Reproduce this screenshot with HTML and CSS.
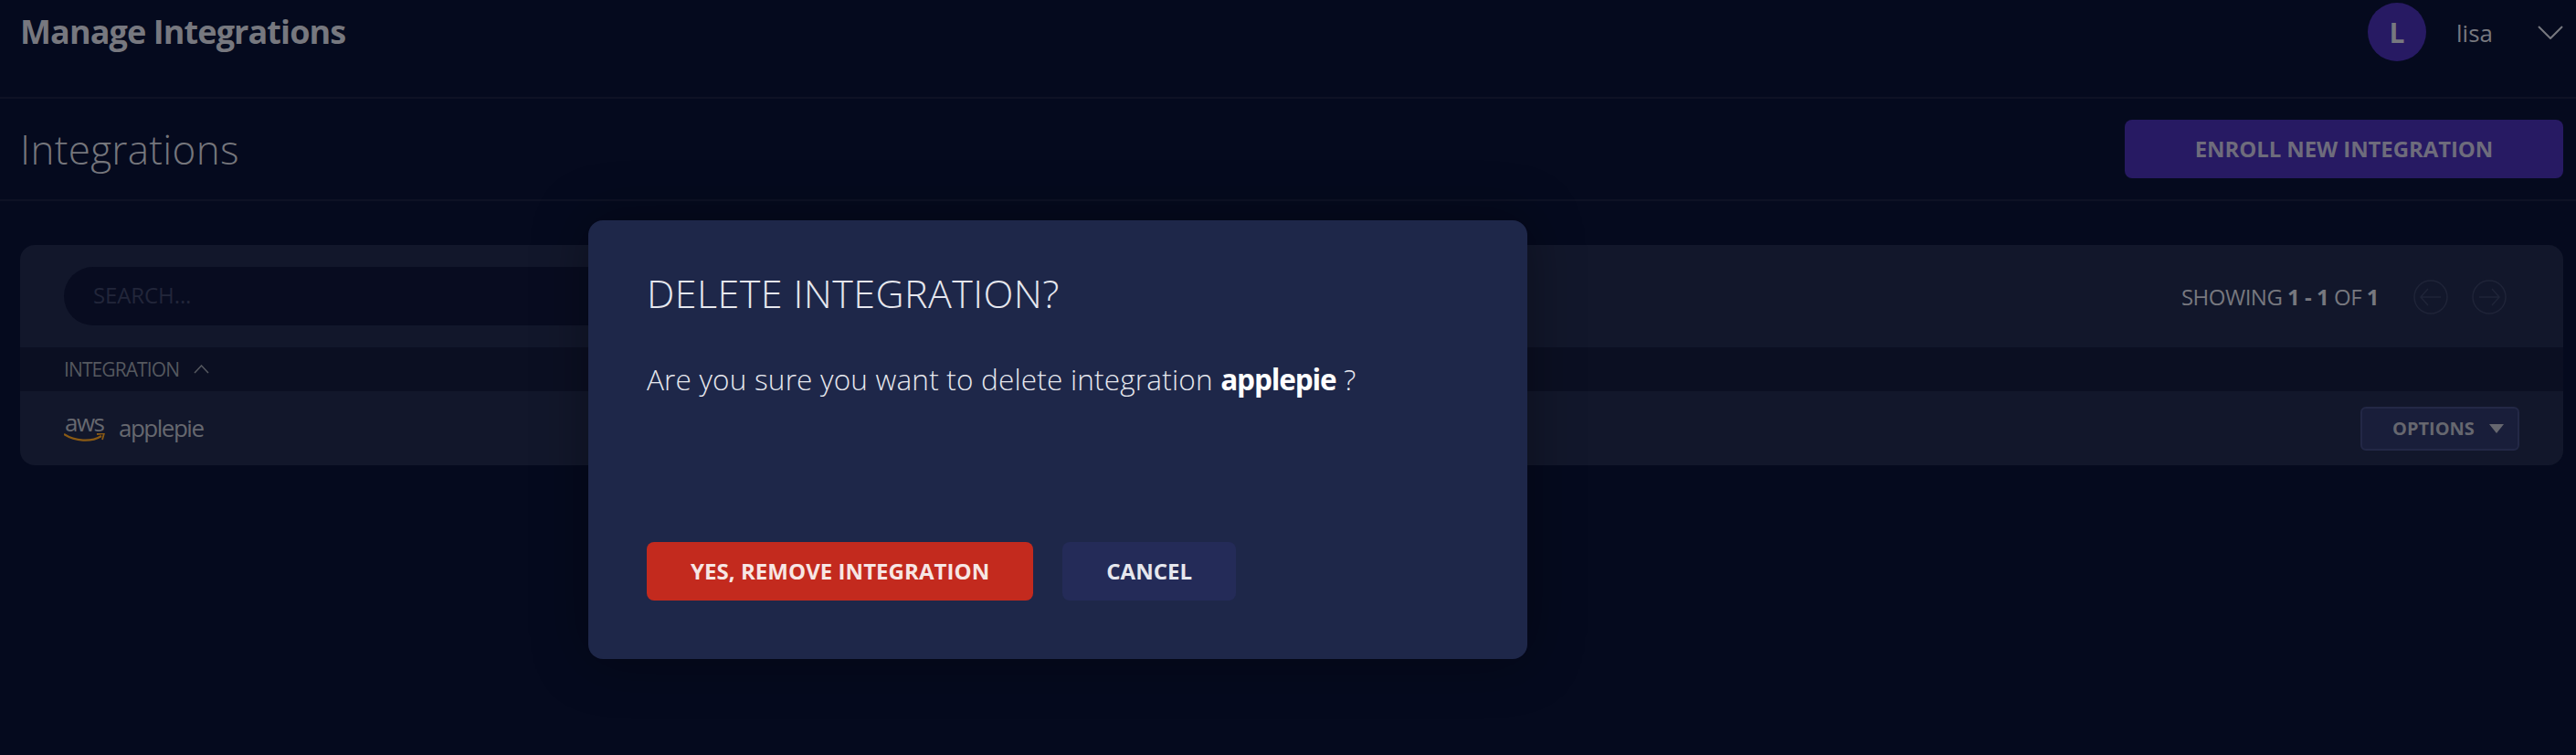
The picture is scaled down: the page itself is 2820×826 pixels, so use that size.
FILE: index.html
```html
<!DOCTYPE html>
<html lang="en">
<head>
<meta charset="utf-8">
<title>Manage Integrations</title>
<link rel="stylesheet" href="styles.css">
</head>
<body>
<div class="page">
  <header class="topbar">
    <div class="app-title">Manage Integrations</div>
    <div class="user">
      <span class="avatar">L</span>
      <span class="username">lisa</span>
      <svg class="user-chevron" viewBox="0 0 28 15" width="28" height="15"><path d="M1 1l13 13L27 1" fill="none" stroke="#77787f" stroke-width="2"/></svg>
    </div>
  </header>
  <section class="subbar">
    <h1 class="page-title">Integrations</h1>
    <button class="enroll">ENROLL NEW INTEGRATION</button>
  </section>
  <main class="content">
    <div class="card">
      <div class="toolbar">
        <div class="search">SEARCH...</div>
        <div class="pager">
          <span class="count">SHOWING <b>1 - 1</b> OF <b>1</b></span>
          <svg class="pager-btn" viewBox="0 0 38 38" width="38" height="38"><circle cx="19" cy="19" r="18" fill="none" stroke="#1f2438" stroke-width="1.5"/><path d="M30 19H8M16 10l-8 9 8 9" fill="none" stroke="#1f2438" stroke-width="1.5"/></svg>
          <svg class="pager-btn" viewBox="0 0 38 38" width="38" height="38"><circle cx="19" cy="19" r="18" fill="none" stroke="#1f2438" stroke-width="1.5"/><path d="M8 19h22M22 10l8 9-8 9" fill="none" stroke="#1f2438" stroke-width="1.5"/></svg>
        </div>
      </div>
      <div class="table-head">
        <span>INTEGRATION</span>
        <svg viewBox="0 0 17 10" width="17" height="10"><path d="M1 9l7.500-8L16 9" fill="none" stroke="#55585f" stroke-width="1.500"/></svg>
      </div>
      <div class="table-row">
        <div class="row-name">
          <div class="aws">
            <span class="aws-text">aws</span>
            <svg class="aws-smile" viewBox="0 0 45 11" width="45" height="11">
              <path d="M0 1c12 8 30 9 41 2" fill="none" stroke="#8a5a14" stroke-width="2.200"/>
              <path d="M36 1l8-1-2 7" fill="none" stroke="#8a5a14" stroke-width="1.800"/>
            </svg>
          </div>
          <span class="name">applepie</span>
        </div>
        <button class="options">OPTIONS<span class="caret"></span></button>
      </div>
    </div>
  </main>
</div>
<div class="dialog" role="dialog">
  <h2 class="dialog-title">DELETE INTEGRATION?</h2>
  <p class="dialog-text">Are you sure you want to delete integration <b>applepie</b> ?</p>
  <div class="dialog-actions">
    <button class="btn btn-danger">YES, REMOVE INTEGRATION</button>
    <button class="btn btn-cancel">CANCEL</button>
  </div>
</div>
</body>
</html>
```
FILE: styles.css
```css
* { box-sizing: border-box; }
html, body { margin: 0; height: 100%; }
body {
  background: #050a1e;
  font-family: "Open Sans", "Noto Sans", sans-serif;
  color: #77787f;
  overflow: hidden;
  position: relative;
}
button { font-family: inherit; border: 0; cursor: pointer; }

.topbar {
  height: 108px;
  border-bottom: 2px solid #0e1225;
  display: flex;
  justify-content: space-between;
  padding: 3px 14px 0 22px;
}
.app-title {
  font-size: 36px;
  font-weight: 700;
  letter-spacing: -0.9px;
  line-height: 64px;
  color: #77787f;
}
.user { display: flex; align-items: flex-start; }
.avatar {
  width: 64px; height: 64px;
  border-radius: 50%;
  background: #271a63;
  color: #77787f;
  font-size: 30px;
  font-weight: 700;
  display: flex; align-items: center; justify-content: center;
}
.username {
  margin-left: 33px;
  font-size: 26px;
  line-height: 66px;
  font-weight: 400;
  width: 89px;
}
.user-chevron { margin-top: 25px; }

.subbar {
  height: 112px;
  border-bottom: 2px solid #0e1225;
  display: flex;
  justify-content: space-between;
  align-items: center;
  padding: 0 14px 0 22px;
}
.page-title {
  margin: 0;
  font-size: 44px;
  font-weight: 300;
  letter-spacing: 0.3px;
  color: #75767c;
}
.enroll {
  width: 480px; height: 64px;
  background: #271a63;
  border-radius: 8px;
  color: #6e6c7c;
  font-size: 24px;
  font-weight: 700;
  letter-spacing: -0.1px;
  padding-bottom: 2px;
}

.content { padding: 48px 14px 0 22px; }
.card {
  background: #12172b;
  border-radius: 16px;
  height: 241px;
  overflow: hidden;
}
.toolbar {
  height: 112px;
  display: flex;
  justify-content: space-between;
  align-items: flex-start;
  padding: 24px 62px 0 48px;
}
.search {
  width: 1000px; height: 64px;
  border-radius: 32px;
  background: #080c20;
  color: #22263a;
  font-size: 24px;
  line-height: 62px;
  padding-left: 32px;
  letter-spacing: -0.1px;
}
.pager { display: flex; align-items: center; height: 74px; margin-top: -4px; }
.count { font-size: 24px; letter-spacing: -0.5px; color: #77787f; margin-right: 38px; padding-bottom: 2px; }
.count b { font-weight: 700; }
.pager-btn { margin-right: 26px; }
.pager-btn:last-child { margin-right: 0; }

.table-head {
  height: 48px;
  background: #0b0f22;
  display: flex;
  align-items: center;
  gap: 16px;
  padding-left: 48px;
  font-size: 21px;
  letter-spacing: -0.9px;
  color: #55585f;
}
.table-row {
  height: 81px;
  display: flex;
  justify-content: space-between;
  align-items: center;
  padding: 0 48px;
}
.row-name { display: flex; align-items: center; gap: 15px; padding-bottom: 2px; }
.aws { display: flex; flex-direction: column; width: 45px; gap: 2px; margin-top: 2px; }
.aws-text {
  font-size: 26px;
  line-height: 20px;
  letter-spacing: -1.5px;
  padding-left: 1px;
  color: #66686f;
}
.aws-smile { display: block; }
.name { font-size: 26px; letter-spacing: -1.5px; color: #66686f; }
.options {
  width: 174px; height: 48px;
  background: #191e3a;
  border: 2px solid #232846;
  border-radius: 6px;
  color: #66676f;
  font-size: 20px;
  font-weight: 700;
  letter-spacing: 0;
  display: flex;
  align-items: center;
  padding: 0 0 0 33px;
  gap: 16px;
}
.caret {
  width: 0; height: 0;
  border-left: 8px solid transparent;
  border-right: 8px solid transparent;
  border-top: 10px solid #66676f;
}

.dialog {
  position: absolute;
  left: 644px; top: 241px;
  width: 1028px; height: 480px;
  background: #1e2749;
  border-radius: 16px;
  padding: 50px 64px 0;
  box-shadow: 0 0 60px rgba(0, 0, 0, .35);
  color: #e6e7ee;
}
.dialog-title {
  margin: 0;
  font-size: 43px;
  font-weight: 300;
  line-height: 60px;
  letter-spacing: 0.45px;
  color: #e6e7ee;
}
.dialog-text {
  margin: 44px 0 0;
  font-size: 31.5px;
  font-weight: 300;
  line-height: 40px;
  letter-spacing: 0.2px;
}
.dialog-text b { font-weight: 700; color: #fff; letter-spacing: -1.1px; }
.dialog-actions {
  position: absolute;
  left: 64px; top: 352px;
  display: flex;
  gap: 32px;
}
.btn {
  height: 64px;
  border-radius: 8px;
  font-size: 24px;
  font-weight: 700;
  letter-spacing: 0.05px;
  padding: 0 48px 2px;
}
.btn-danger { background: #c32a1e; color: #f7e6e4; }
.btn-cancel { background: #242b58; color: #e6e7ee; }
```
